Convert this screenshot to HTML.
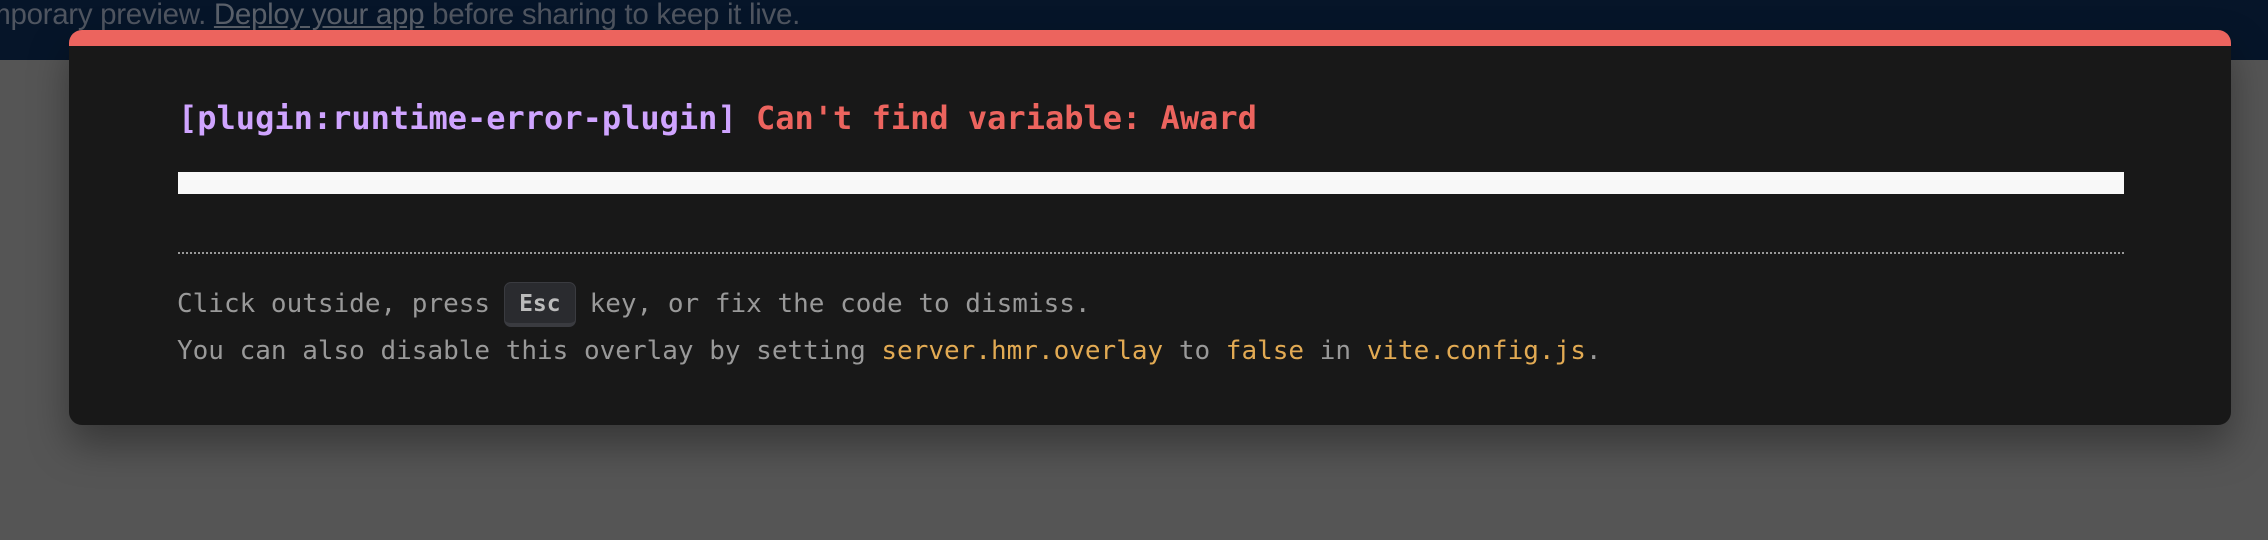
<!DOCTYPE html>
<html><head><meta charset="utf-8"><style>
html,body{margin:0;padding:0;width:2268px;height:540px;overflow:hidden;background:#555;font-family:"Liberation Sans",sans-serif}
.banner{position:absolute;left:0;top:0;width:2268px;height:60px;background:#061529;overflow:hidden}
.btxt{position:absolute;right:1468px;top:-2px;white-space:nowrap;font-size:29.5px;color:#4f5560;letter-spacing:-0.3px}
.btxt u{color:#5a606a}
.modal{position:absolute;left:69px;top:30px;width:2162px;height:395px;background:#181818;border-radius:13px;border-top:16px solid #ec645e;box-sizing:border-box;box-shadow:0 20px 40px rgba(0,0,0,.35)}
.mono{font-family:"DejaVu Sans Mono","Liberation Mono",monospace}
.title{position:absolute;left:109px;top:53px;font-size:32px;font-weight:bold;white-space:nowrap}
.bar{position:absolute;left:109px;top:126px;width:1946px;height:22px;background:#f8f8f8}
.dots{position:absolute;left:109px;top:206px;width:1946px;border-top:2px dotted #999}
.tip{position:absolute;left:108px;font-size:26px;color:#999;white-space:nowrap}
kbd{display:inline-block;font-family:"DejaVu Sans Mono",monospace;font-weight:bold;font-size:23px;color:#bbb;background:#2a2b2f;border-radius:7px;border:1px solid #3a3b40;border-bottom:4px solid #3a3b40;padding:8px 14px 6px;line-height:26px;vertical-align:middle;margin:0 14px}
.y{color:#e2aa53}
</style></head><body>
<div class="banner"><div class="btxt">temporary preview. <u>Deploy your app</u> before sharing to keep it live.</div></div>
<div class="modal">
<div class="title mono"><span style="color:#cfa4ff">[plugin:runtime-error-plugin]</span> <span style="color:#ec645e">Can't find variable: Award</span></div>
<div class="bar"></div>
<div class="dots"></div>
<div class="tip mono" style="top:236px">Click outside, press<kbd>Esc</kbd>key, or fix the code to dismiss.</div>
<div class="tip mono" style="top:290px">You can also disable this overlay by setting <span class="y">server.hmr.overlay</span> to <span class="y">false</span> in <span class="y">vite.config.js</span>.</div>
</div>
</body></html>
